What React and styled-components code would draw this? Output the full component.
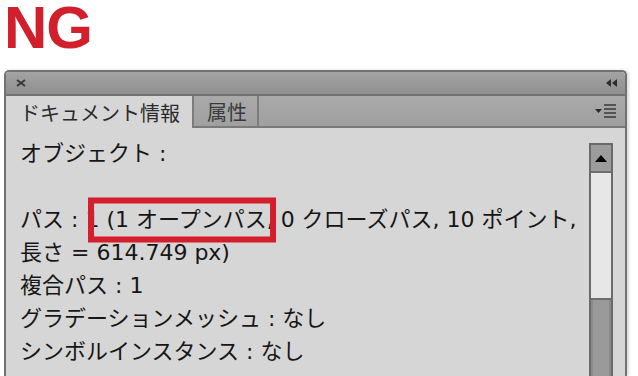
import React from "react";
import styled, { createGlobalStyle } from "styled-components";

const Global = createGlobalStyle`
  html, body { margin: 0; padding: 0; background: #ffffff; }
  body { width: 638px; height: 376px; overflow: hidden; }
  #root { width: 638px; height: 376px; overflow: hidden; }
`;

const Page = styled.div`
  width: 638px;
  height: 376px;
  display: flex;
  flex-direction: column;
  overflow: hidden;
`;

const Heading = styled.div`
  height: 70px;
  flex: none;
  padding-left: 4px;
  font-family: "Liberation Sans", Arial, sans-serif;
  font-weight: 700;
  font-size: 60px;
  line-height: 56px;
  color: #d21f2b;
  letter-spacing: -1px;
`;

const Panel = styled.div`
  margin-left: 4px;
  width: 619px;
  flex: 1;
  display: flex;
  flex-direction: column;
  border: 2px solid #727272;
  border-bottom: none;
  border-radius: 5px 5px 0 0;
  box-shadow: 2px 0 3px rgba(0, 0, 0, 0.15);
  overflow: hidden;
  font-family: "DejaVu Sans", "Noto Sans CJK JP", sans-serif;
`;

const TitleBar = styled.div`
  height: 22px;
  flex: none;
  display: flex;
  align-items: center;
  justify-content: space-between;
  padding: 0 7px 0 10px;
  background: linear-gradient(#a3a3a3, #8f8f8f);
  border-bottom: 2px solid #727272;
`;

const TabRow = styled.div`
  height: 30px;
  flex: none;
  display: flex;
  align-items: stretch;
  background: linear-gradient(#a9a9a9, #a0a0a0);
  border-bottom: 2px solid #7a7a7a;
`;

const Tab = styled.div`
  display: flex;
  align-items: center;
  padding: 0 ${(p) => (p.$active ? "12px" : "10px")} 0 ${(p) => (p.$active ? "14px" : "13px")};
  font-family: "Noto Sans CJK JP", sans-serif;
  font-size: 20px;
  color: ${(p) => (p.$active ? "#2a2a2a" : "#3a3a3a")};
  background: ${(p) => (p.$active ? "#d6d6d6" : "transparent")};
  border-right: 2px solid #7c7c7c;
  margin-bottom: ${(p) => (p.$active ? "-2px" : "0")};
`;

const TabSpacer = styled.div`
  flex: 1;
  display: flex;
  align-items: center;
  justify-content: flex-end;
  padding-right: 8px;
`;

const Body = styled.div`
  flex: 1;
  display: flex;
  background: #d6d6d6;
`;

const TextArea = styled.div`
  flex: 1;
  padding: 9px 0 0 14px;
  font-size: 22px;
  line-height: 33px;
  color: #161616;
  white-space: nowrap;
`;

const Line = styled.div`
  height: 33px;
`;

const Highlight = styled.span`
  position: relative;
  &::after {
    content: "";
    position: absolute;
    left: -18px;
    right: -2px;
    top: 50%;
    height: 45px;
    transform: translateY(-50%);
    box-sizing: border-box;
    border: 6px solid #d21f2b;
  }
`;

const Scrollbar = styled.div`
  width: 20px;
  margin: 15px 12px 0 0;
  display: flex;
  flex-direction: column;
  border: 2px solid #6a6a6a;
  border-bottom: none;
  background: #e6e6e6;
`;

const ScrollButton = styled.div`
  height: 26px;
  flex: none;
  display: flex;
  align-items: center;
  justify-content: center;
  background: #9c9c9c;
  border-bottom: 2px solid #6e6e6e;
`;

const Track = styled.div`
  height: 125px;
  flex: none;
  background: #e7e7e7;
`;

const Thumb = styled.div`
  flex: 1;
  background: #9a9a9a;
  border-top: 2px solid #6e6e6e;
  box-shadow: inset 2px 0 0 #8a8a8a, inset -2px 0 0 #8a8a8a;
`;

const Icon = styled.svg`
  display: block;
`;

export default function App() {
  return (
    <>
      <Global />
      <Page>
        <Heading>NG</Heading>
        <Panel>
          <TitleBar>
            <Icon width="10" height="8" viewBox="0 0 10 8">
              <path d="M1 1 L9 7 M9 1 L1 7" stroke="#3a3a3a" strokeWidth="2" />
            </Icon>
            <Icon width="12" height="8" viewBox="0 0 12 8">
              <path d="M5 0 L0 4 L5 8 Z M11 0 L6 4 L11 8 Z" fill="#2e2e2e" />
            </Icon>
          </TitleBar>
          <TabRow>
            <Tab $active>ドキュメント情報</Tab>
            <Tab>属性</Tab>
            <TabSpacer>
              <Icon width="22" height="14" viewBox="0 0 22 14">
                <path d="M0 5 L7 5 L3.5 9 Z" fill="#2a2a2a" />
                <path d="M9 1 H21 M9 5 H21 M9 9 H21 M9 13 H21" stroke="#3a3a3a" strokeWidth="1.5" />
              </Icon>
            </TabSpacer>
          </TabRow>
          <Body>
            <TextArea>
              <Line>オブジェクト :</Line>
              <Line />
              <Line>
                パス : 1 <Highlight>(1 オープンパス,</Highlight> 0 クローズパス, 10 ポイント,
              </Line>
              <Line>長さ = 614.749 px)</Line>
              <Line>複合パス : 1</Line>
              <Line>グラデーションメッシュ : なし</Line>
              <Line>シンボルインスタンス : なし</Line>
            </TextArea>
            <Scrollbar>
              <ScrollButton>
                <Icon width="12" height="7" viewBox="0 0 12 7">
                  <path d="M6 0 L12 7 L0 7 Z" fill="#000" />
                </Icon>
              </ScrollButton>
              <Track />
              <Thumb />
            </Scrollbar>
          </Body>
        </Panel>
      </Page>
    </>
  );
}
